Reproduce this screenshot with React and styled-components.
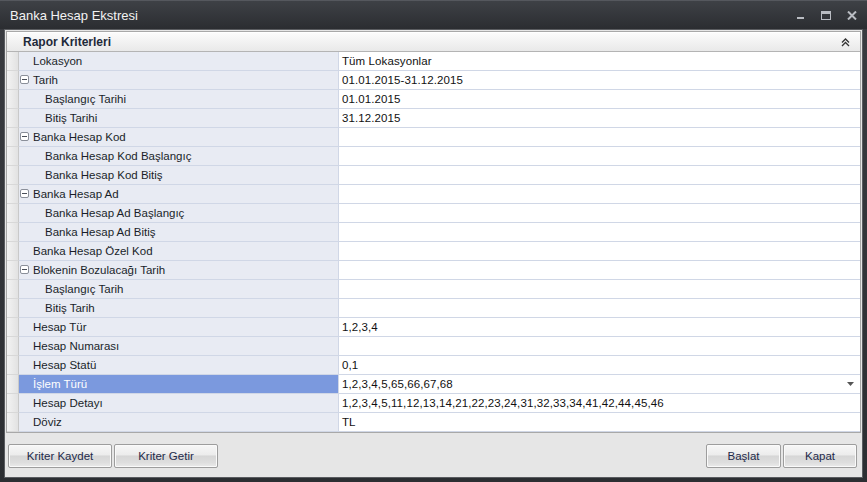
import React from 'react';
import styled, { createGlobalStyle } from 'styled-components';

const GlobalStyle = createGlobalStyle`
  html, body {
    margin: 0;
    padding: 0;
    background: #2e3034;
  }
  * { box-sizing: border-box; }
`;

const Window = styled.div`
  width: 867px;
  height: 482px;
  display: flex;
  flex-direction: column;
  background: linear-gradient(#3a3c41, #2c2e32);
  padding: 0 4px 4px 4px;
  font-family: "Liberation Sans", Arial, sans-serif;
  font-size: 11.5px;
`;

const TitleBar = styled.div`
  height: 29px;
  display: flex;
  align-items: center;
  color: #f2f2f2;
  font-size: 13px;
  border-top: 1px solid #55585e;
  margin: 0 -4px;
  padding-left: 10px;
  background: linear-gradient(#3e4146, #2b2d31);
`;

const Title = styled.div`
  flex: 1;
`;

const WinButtons = styled.div`
  display: flex;
  align-items: center;
  gap: 16px;
  margin-right: 10px;
`;

const Body = styled.div`
  flex: 1;
  display: flex;
  flex-direction: column;
  background: #e6e6e6;
  border: 1px solid #5a5c60;
`;

const Panel = styled.div`
  margin: 1px 1px 0 1px;
  border: 1px solid #a8a8a8;
  background: #fff;
  display: flex;
  flex-direction: column;
`;

const PanelHeader = styled.div`
  height: 20px;
  display: flex;
  align-items: center;
  padding: 0 0 0 16px;
  font-weight: bold;
  font-size: 12px;
  color: #1e2a3a;
  background: linear-gradient(#fbfbfb, #e9e9e9);
  border-bottom: 1px solid #b4b4b4;
  border-top: 1px solid #ffffff;
`;

const HeaderText = styled.div`
  flex: 1;
`;

const Collapse = styled.div`
  width: 18px;
  margin-right: 6px;
  display: flex;
  justify-content: center;
`;

const Grid = styled.div`
  display: flex;
  flex-direction: column;
`;

const Row = styled.div`
  display: grid;
  grid-template-columns: 12px 320px 1fr;
  height: 19px;
`;

const Indicator = styled.div`
  background: linear-gradient(90deg, #f3f3f3, #e2e2e2);
  border-right: 1px solid #c9c9c9;
  border-bottom: 1px solid #d8d8d8;
`;

const Label = styled.div`
  display: flex;
  align-items: center;
  padding-left: ${({ $level }) => ($level === 1 ? 26 : 14)}px;
  background: ${({ $selected }) => ($selected ? '#7b99de' : '#e8ebf3')};
  color: ${({ $selected }) => ($selected ? '#ffffff' : '#1a1f2a')};
  border-bottom: 1px solid #d0d7e6;
  border-right: 1px solid #d0d7e6;
  position: relative;
  white-space: nowrap;
`;

const Toggle = styled.span`
  position: absolute;
  left: 1px;
  top: 4px;
  width: 9px;
  height: 9px;
  border: 1px solid #8a8f99;
  border-radius: 2px;
  background: #fff;
  &::after {
    content: '';
    position: absolute;
    left: 1px;
    top: 3px;
    width: 5px;
    height: 1px;
    background: #4a4f59;
  }
`;

const Value = styled.div`
  display: flex;
  align-items: center;
  padding-left: 3px;
  padding-right: 6px;
  background: #fff;
  color: #111;
  border-bottom: 1px solid #d0d7e6;
  white-space: nowrap;
  letter-spacing: 0.1px;
`;

const ValueText = styled.span`
  flex: 1;
`;

const Footer = styled.div`
  flex: 1;
  display: flex;
  align-items: center;
  padding: 0 5px 0 3px;
  gap: 2px;
`;

const Spacer = styled.div`
  flex: 1;
`;

const Button = styled.button`
  width: ${({ $w }) => $w}px;
  height: 24px;
  margin-top: 2px;
  border: 1px solid #9d9d9d;
  border-radius: 2px;
  font-family: "Liberation Sans", Arial, sans-serif;
  font-size: 11.5px;
  color: #1e2a4a;
  background: linear-gradient(#f7f7f7 0%, #ececec 45%, #d6d6d6 50%, #dedede 80%, #ebebeb 100%);
  box-shadow: inset 0 0 0 1px #fafafa;
  padding: 0;
`;

const rows = [
  { label: 'Lokasyon', value: 'Tüm Lokasyonlar' },
  { label: 'Tarih', value: '01.01.2015-31.12.2015', group: true },
  { label: 'Başlangıç Tarihi', value: '01.01.2015', level: 1 },
  { label: 'Bitiş Tarihi', value: '31.12.2015', level: 1 },
  { label: 'Banka Hesap Kod', group: true },
  { label: 'Banka Hesap Kod Başlangıç', level: 1 },
  { label: 'Banka Hesap Kod Bitiş', level: 1 },
  { label: 'Banka Hesap Ad', group: true },
  { label: 'Banka Hesap Ad Başlangıç', level: 1 },
  { label: 'Banka Hesap Ad Bitiş', level: 1 },
  { label: 'Banka Hesap Özel Kod' },
  { label: 'Blokenin Bozulacağı Tarih', group: true },
  { label: 'Başlangıç Tarih', level: 1 },
  { label: 'Bitiş Tarih', level: 1 },
  { label: 'Hesap Tür', value: '1,2,3,4' },
  { label: 'Hesap Numarası' },
  { label: 'Hesap Statü', value: '0,1' },
  { label: 'İşlem Türü', value: '1,2,3,4,5,65,66,67,68', selected: true },
  { label: 'Hesap Detayı', value: '1,2,3,4,5,11,12,13,14,21,22,23,24,31,32,33,34,41,42,44,45,46' },
  { label: 'Döviz', value: 'TL' },
];

const Minimize = () => (
  <svg width="9" height="9" viewBox="0 0 9 9">
    <rect x="1" y="6" width="7" height="2" fill="#b9bcc2" />
  </svg>
);

const Maximize = () => (
  <svg width="10" height="9" viewBox="0 0 10 9">
    <rect x="0.5" y="0.5" width="9" height="8" fill="none" stroke="#b9bcc2" />
    <rect x="1" y="1" width="8" height="2" fill="#b9bcc2" />
  </svg>
);

const Close = () => (
  <svg width="10" height="9" viewBox="0 0 10 9">
    <path d="M1 0.5 L9 8.5 M9 0.5 L1 8.5" stroke="#b9bcc2" strokeWidth="2" />
  </svg>
);

const DoubleUp = () => (
  <svg width="9" height="9" viewBox="0 0 9 9">
    <path d="M1 4.5 L4.5 1 L8 4.5 M1 8 L4.5 4.5 L8 8" fill="none" stroke="#333" strokeWidth="1.3" />
  </svg>
);

const DropArrow = () => (
  <svg width="7" height="4" viewBox="0 0 7 4">
    <path d="M0 0 H7 L3.5 4 Z" fill="#555" />
  </svg>
);

const App = () => (
  <>
    <GlobalStyle />
    <Window>
      <TitleBar>
        <Title>Banka Hesap Ekstresi</Title>
        <WinButtons>
          <Minimize />
          <Maximize />
          <Close />
        </WinButtons>
      </TitleBar>
      <Body>
        <Panel>
          <PanelHeader>
            <HeaderText>Rapor Kriterleri</HeaderText>
            <Collapse>
              <DoubleUp />
            </Collapse>
          </PanelHeader>
          <Grid>
            {rows.map((r) => (
              <Row key={r.label + (r.level || 0)}>
                <Indicator />
                <Label $level={r.level} $selected={r.selected}>
                  {r.group && <Toggle />}
                  {r.label}
                </Label>
                <Value>
                  <ValueText>{r.value}</ValueText>
                  {r.selected && <DropArrow />}
                </Value>
              </Row>
            ))}
          </Grid>
        </Panel>
        <Footer>
          <Button $w={104}>Kriter Kaydet</Button>
          <Button $w={104}>Kriter Getir</Button>
          <Spacer />
          <Button $w={75}>Başlat</Button>
          <Button $w={74}>Kapat</Button>
        </Footer>
      </Body>
    </Window>
  </>
);

export default App;
